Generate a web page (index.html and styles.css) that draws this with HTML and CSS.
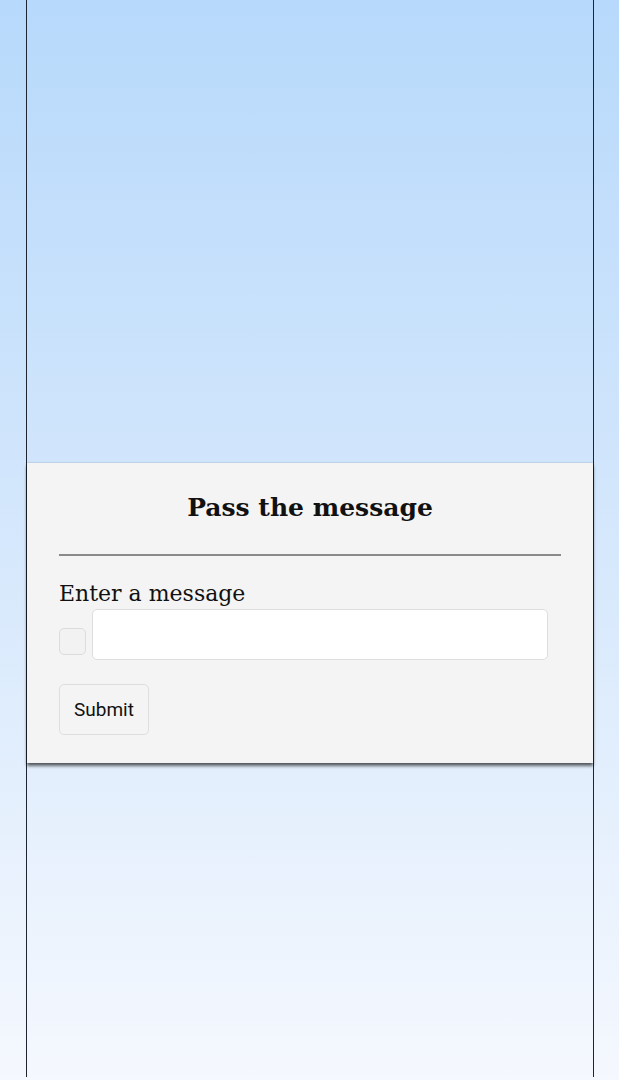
FILE: index.html
```html
<!DOCTYPE html>
<html lang="en">
<head>
<meta charset="utf-8">
<title>Pass the message</title>
<link rel="stylesheet" href="styles.css">
</head>
<body>
<div class="page">
  <main class="column">
    <section class="card">
      <h1 class="title">Pass the message</h1>
      <hr class="rule">
      <label class="label" for="msg">Enter a message</label>
      <div class="field-row">
        <input class="check" type="checkbox" aria-label="toggle">
        <input class="text" id="msg" type="text">
      </div>
      <button class="submit" type="button">Submit</button>
    </section>
  </main>
</div>
</body>
</html>
```
FILE: styles.css
```css
html, body {
  margin: 0;
  padding: 0;
  height: 100%;
}
body {
  background: linear-gradient(to bottom, #b7d9fb 0%, #d2e6fc 45%, #f5f8fe 100%);
  font-family: "DejaVu Serif", "Liberation Serif", serif;
}
.page {
  height: 1080px;
}
.column {
  box-sizing: border-box;
  margin-left: 26px;
  width: 568px;
  height: 1077px;
  border-left: 1px solid #1e2430;
  border-right: 1px solid #1e2430;
  padding-top: 463px;
}
.card {
  box-sizing: border-box;
  background: #f4f4f4;
  height: 300px;
  padding: 26px 32px 0 32px;
  box-shadow: 0 3px 3px rgba(0,0,0,0.6), 0 0 2px rgba(0,0,0,0.25);
  display: flex;
  flex-direction: column;
  align-items: flex-start;
}
.title {
  align-self: stretch;
  text-align: center;
  margin: 0;
  font-size: 25px;
  line-height: 38px;
  font-weight: bold;
  color: #111;
}
.rule {
  align-self: stretch;
  margin: 27px 0 0 0;
  border: none;
  height: 2px;
  background: #8a8a8a;
}
.label {
  margin-top: 23px;
  font-size: 22px;
  line-height: 30px;
  color: #111;
}
.field-row {
  display: flex;
  align-items: center;
  gap: 6px;
  width: 489px;
  margin-top: 0;
}
.check {
  appearance: none;
  -webkit-appearance: none;
  margin: 14px 0 0 0;
  width: 27px;
  height: 27px;
  box-sizing: border-box;
  border: 1px solid #dcdcdc;
  border-radius: 5px;
  background: #f2f2f2;
  flex: none;
}
.text {
  flex: 1;
  box-sizing: border-box;
  height: 51px;
  border: 1px solid #dedede;
  border-radius: 5px;
  background: #fff;
  margin: 0;
}
.submit {
  margin-top: 24px;
  box-sizing: border-box;
  height: 51px;
  width: 90px;
  border: 1px solid #dedede;
  border-radius: 5px;
  background: #f4f4f4;
  font-family: Roboto, "Liberation Sans", sans-serif;
  font-size: 19px;
  color: #111;
  padding: 0;
}
```
